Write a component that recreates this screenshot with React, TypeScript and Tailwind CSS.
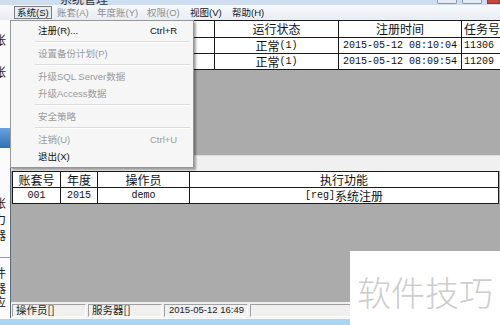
import React from 'react';

type MenuEntry = { label: string; shortcut?: string; disabled?: boolean } | 'sep';

const systemMenu: MenuEntry[] = [
  { label: '注册(R)...', shortcut: 'Ctrl+R' },
  'sep',
  { label: '设置备份计划(P)', disabled: true },
  'sep',
  { label: '升级SQL Server数据', disabled: true },
  { label: '升级Access数据', disabled: true },
  'sep',
  { label: '安全策略', disabled: true },
  'sep',
  { label: '注销(U)', shortcut: 'Ctrl+U', disabled: true },
  { label: '退出(X)' },
];

const topBar = [
  { label: '系统(S)', w: 'w-[40px]', active: true },
  { label: '账套(A)', w: 'w-[40px]', disabled: true },
  { label: '年度账(Y)', w: 'w-[50px]', disabled: true },
  { label: '权限(O)', w: 'w-[43px]', disabled: true },
  { label: '视图(V)', w: 'w-[42px]' },
  { label: '帮助(H)', w: 'w-[60px]' },
];

// ascii runs get the half-width mono face, like SimSun does
const Mix: React.FC<{ text: string }> = ({ text }) => {
  const parts = text.split(/([\x20-\x7e]+)/).filter(Boolean);
  return (
    <>
      {parts.map((p, i) =>
        /^[\x20-\x7e]+$/.test(p) ? (
          <span key={i} className="font-['Liberation_Mono',monospace] text-[10px] whitespace-pre">
            {p}
          </span>
        ) : (
          <span key={i}>{p}</span>
        )
      )}
    </>
  );
};

const topCols = ['w-[204px]', 'w-[124px]', 'w-[123px]', 'w-[60px]'];
const topHead = ['', '运行状态', '注册时间', '任务号'];
const topRows = [
  ['', '正常(1)', '2015-05-12 08:10:04', '11306'],
  ['', '正常(1)', '2015-05-12 08:09:54', '11209'],
];

const botCols = ['w-[48px]', 'w-[37px]', 'w-[92px]', 'w-[309px]'];
const botHead = ['账套号', '年度', '操作员', '执行功能'];
const botRows = [['001', '2015', 'demo', '[reg]系统注册']];

const Cell: React.FC<{ w: string; text: string; left?: boolean }> = ({ w, text, left }) => (
  <div
    className={`${w} shrink-0 h-full flex items-center border-r border-[#1a1a1a] overflow-hidden whitespace-nowrap leading-none ${
      left ? 'justify-start pl-[2px]' : 'justify-center'
    }`}
  >
    <Mix text={text} />
  </div>
);

const LeftStrip: React.FC = () => (
  <div className="w-[10px] shrink-0 bg-[#fbfbfb] overflow-hidden flex flex-col text-[12px] leading-[12px] text-[#222] font-['Noto_Sans_CJK_SC',sans-serif]">
    <div className="h-[14px]" />
    <div className="h-[12px] -ml-[6px]">帐</div>
    <div className="h-[20px]" />
    <div className="h-[12px] -ml-[6px]">帐</div>
    <div className="h-[50px]" />
    <div className="h-[20px] bg-gradient-to-b from-[#6aa2dc] to-[#2f6fb8]" />
    <div className="h-[49px]" />
    <div className="h-[16px] -ml-[6px]">账</div>
    <div className="h-[16px] -ml-[6px]">力</div>
    <div className="h-[16px] -ml-[6px]">器</div>
    <div className="h-[12px]" />
    <div className="h-px bg-[#9a9a9a]" />
    <div className="h-[9px]" />
    <div className="h-[15px] -ml-[6px]">件</div>
    <div className="h-[14px] -ml-[6px]">器</div>
    <div className="h-[14px] -ml-[6px]">应</div>
  </div>
);

const App: React.FC = () => {
  return (
    <div className="relative w-[500px] h-[325px] overflow-hidden bg-[#f0f0f0] flex flex-col font-['Liberation_Sans','Noto_Sans_CJK_SC',sans-serif]">
      {/* title bar, mostly cut off */}
      <div className="h-[5px] shrink-0 bg-[#cfdeef] flex items-end overflow-hidden">
        <span className="ml-[60px] text-[12px] leading-[12px] text-[#333] font-['Noto_Sans_CJK_SC',sans-serif]">
          系统管理
        </span>
        <div className="ml-auto flex items-start h-full self-start">
          <div className="w-[20px] h-[4px] border border-t-0 border-[#8a97a8] bg-[#e4ebf4] rounded-b-[2px]" />
          <div className="w-[20px] h-[4px] ml-[5px] border border-t-0 border-[#8a97a8] bg-[#e4ebf4] rounded-b-[2px]" />
          <div className="w-[13px] h-[4px] ml-[5px] border border-t-0 border-[#8a3b30] bg-[#c8463a]" />
        </div>
      </div>

      {/* menu bar */}
      <div className="h-[15px] shrink-0 flex items-center pl-[14px] bg-gradient-to-b from-[#f6f9fc] to-[#e8edf4] text-[9.5px] leading-none">
        {topBar.map((m) => (
          <div key={m.label} className={`${m.w} shrink-0 h-full flex items-center`}>
            <span
              className={`h-[13px] flex items-center px-[2px] ${
                m.active ? 'border border-[#7d7d7d] bg-[#e9edf2]' : 'border border-transparent'
              } ${m.disabled ? 'text-[#8e8e8e]' : 'text-[#111]'}`}
            >
              {m.label}
            </span>
          </div>
        ))}
      </div>

      {/* body */}
      <div className="flex flex-1 min-h-0">
        <LeftStrip />
        <div className="flex-1 flex flex-col border-l border-[#5d6b7c] min-w-0 text-[12px] text-[#111] font-['Noto_Sans_CJK_SC',sans-serif]">
          {/* upper child: sessions */}
          <div className="h-[135px] shrink-0 bg-[#ababab] overflow-hidden">
            <div className="bg-white border-t border-[#1a1a1a] w-[520px]">
              <div className="h-[17px] flex border-b border-[#1a1a1a]">
                {topHead.map((h, i) => (
                  <Cell key={i} w={topCols[i]} text={h} left={i === 3} />
                ))}
              </div>
              {topRows.map((r, ri) => (
                <div key={ri} className="h-[16px] flex border-b border-[#1a1a1a]">
                  {r.map((c, i) => (
                    <Cell key={i} w={topCols[i]} text={c} left={i === 3} />
                  ))}
                </div>
              ))}
            </div>
          </div>

          {/* splitter */}
          <div className="h-[16px] shrink-0 bg-[#f0f0f0] border-t border-[#dcdcdc]" />

          {/* lower child: task log */}
          <div className="flex-1 bg-[#ababab] overflow-hidden">
            <div className="ml-[1px] w-[487px] bg-white border-t border-l border-[#1a1a1a]">
              <div className="h-[16px] flex border-b border-[#1a1a1a]">
                {botHead.map((h, i) => (
                  <Cell key={i} w={botCols[i]} text={h} />
                ))}
              </div>
              {botRows.map((r, ri) => (
                <div key={ri} className="h-[16px] flex border-b border-[#1a1a1a]">
                  {r.map((c, i) => (
                    <Cell key={i} w={botCols[i]} text={c} />
                  ))}
                </div>
              ))}
            </div>
          </div>

          {/* status bar */}
          <div className="h-[16px] shrink-0 flex items-center gap-[2px] pl-[1px] bg-[#f0f0f0] text-[#222]">
            <div className="w-[74px] h-[13px] flex items-center pl-[3px] border border-[#a0a0a0] border-r-white border-b-white text-[10.5px] leading-none">
              操作员[]
            </div>
            <div className="w-[74px] h-[13px] flex items-center pl-[3px] border border-[#a0a0a0] border-r-white border-b-white text-[10.5px] leading-none">
              服务器[]
            </div>
            <div className="w-[84px] h-[13px] flex items-center pl-[4px] border border-[#a0a0a0] border-r-white border-b-white text-[9.5px] leading-none font-['Liberation_Sans',sans-serif]">
              2015-05-12 16:49
            </div>
            <div className="flex-1 h-[13px] border border-[#a0a0a0] border-r-white border-b-white" />
          </div>
        </div>
      </div>

      {/* window bottom edge */}
      <div className="h-[7px] shrink-0 bg-[#acd5f3] border-t border-white" />

      {/* open 系统 menu */}
      <div className="absolute left-[10px] top-[20px] w-[184px] h-[148px] bg-[#f6f6f6] border border-[#979797] pt-[1px] shadow-[2px_2px_2px_rgba(0,0,0,0.35)] text-[9.5px] leading-none">
        {systemMenu.map((m, i) =>
          m === 'sep' ? (
            <div key={i} className="h-[6px] flex flex-col justify-center ml-[24px] mr-[3px]">
              <div className="h-px bg-[#dcdcdc]" />
              <div className="h-px bg-white" />
            </div>
          ) : (
            <div
              key={i}
              className={`h-[17px] flex items-center ${m.disabled ? 'text-[#9a9a9a]' : 'text-[#111]'}`}
            >
              <span className="flex-1 pl-[27px]">{m.label}</span>
              <span className="w-[43px]">{m.shortcut ?? ''}</span>
            </div>
          )
        )}
      </div>

      {/* watermark */}
      <div className="absolute right-0 bottom-0 w-[150px] h-[74px] bg-white flex items-center pl-[7px] pt-[7px]">
        <span className="text-[34px] leading-none text-[#cdcdcd] font-['Noto_Sans_CJK_SC',sans-serif] font-light">
          软件技巧
        </span>
      </div>
    </div>
  );
};

export default App;
